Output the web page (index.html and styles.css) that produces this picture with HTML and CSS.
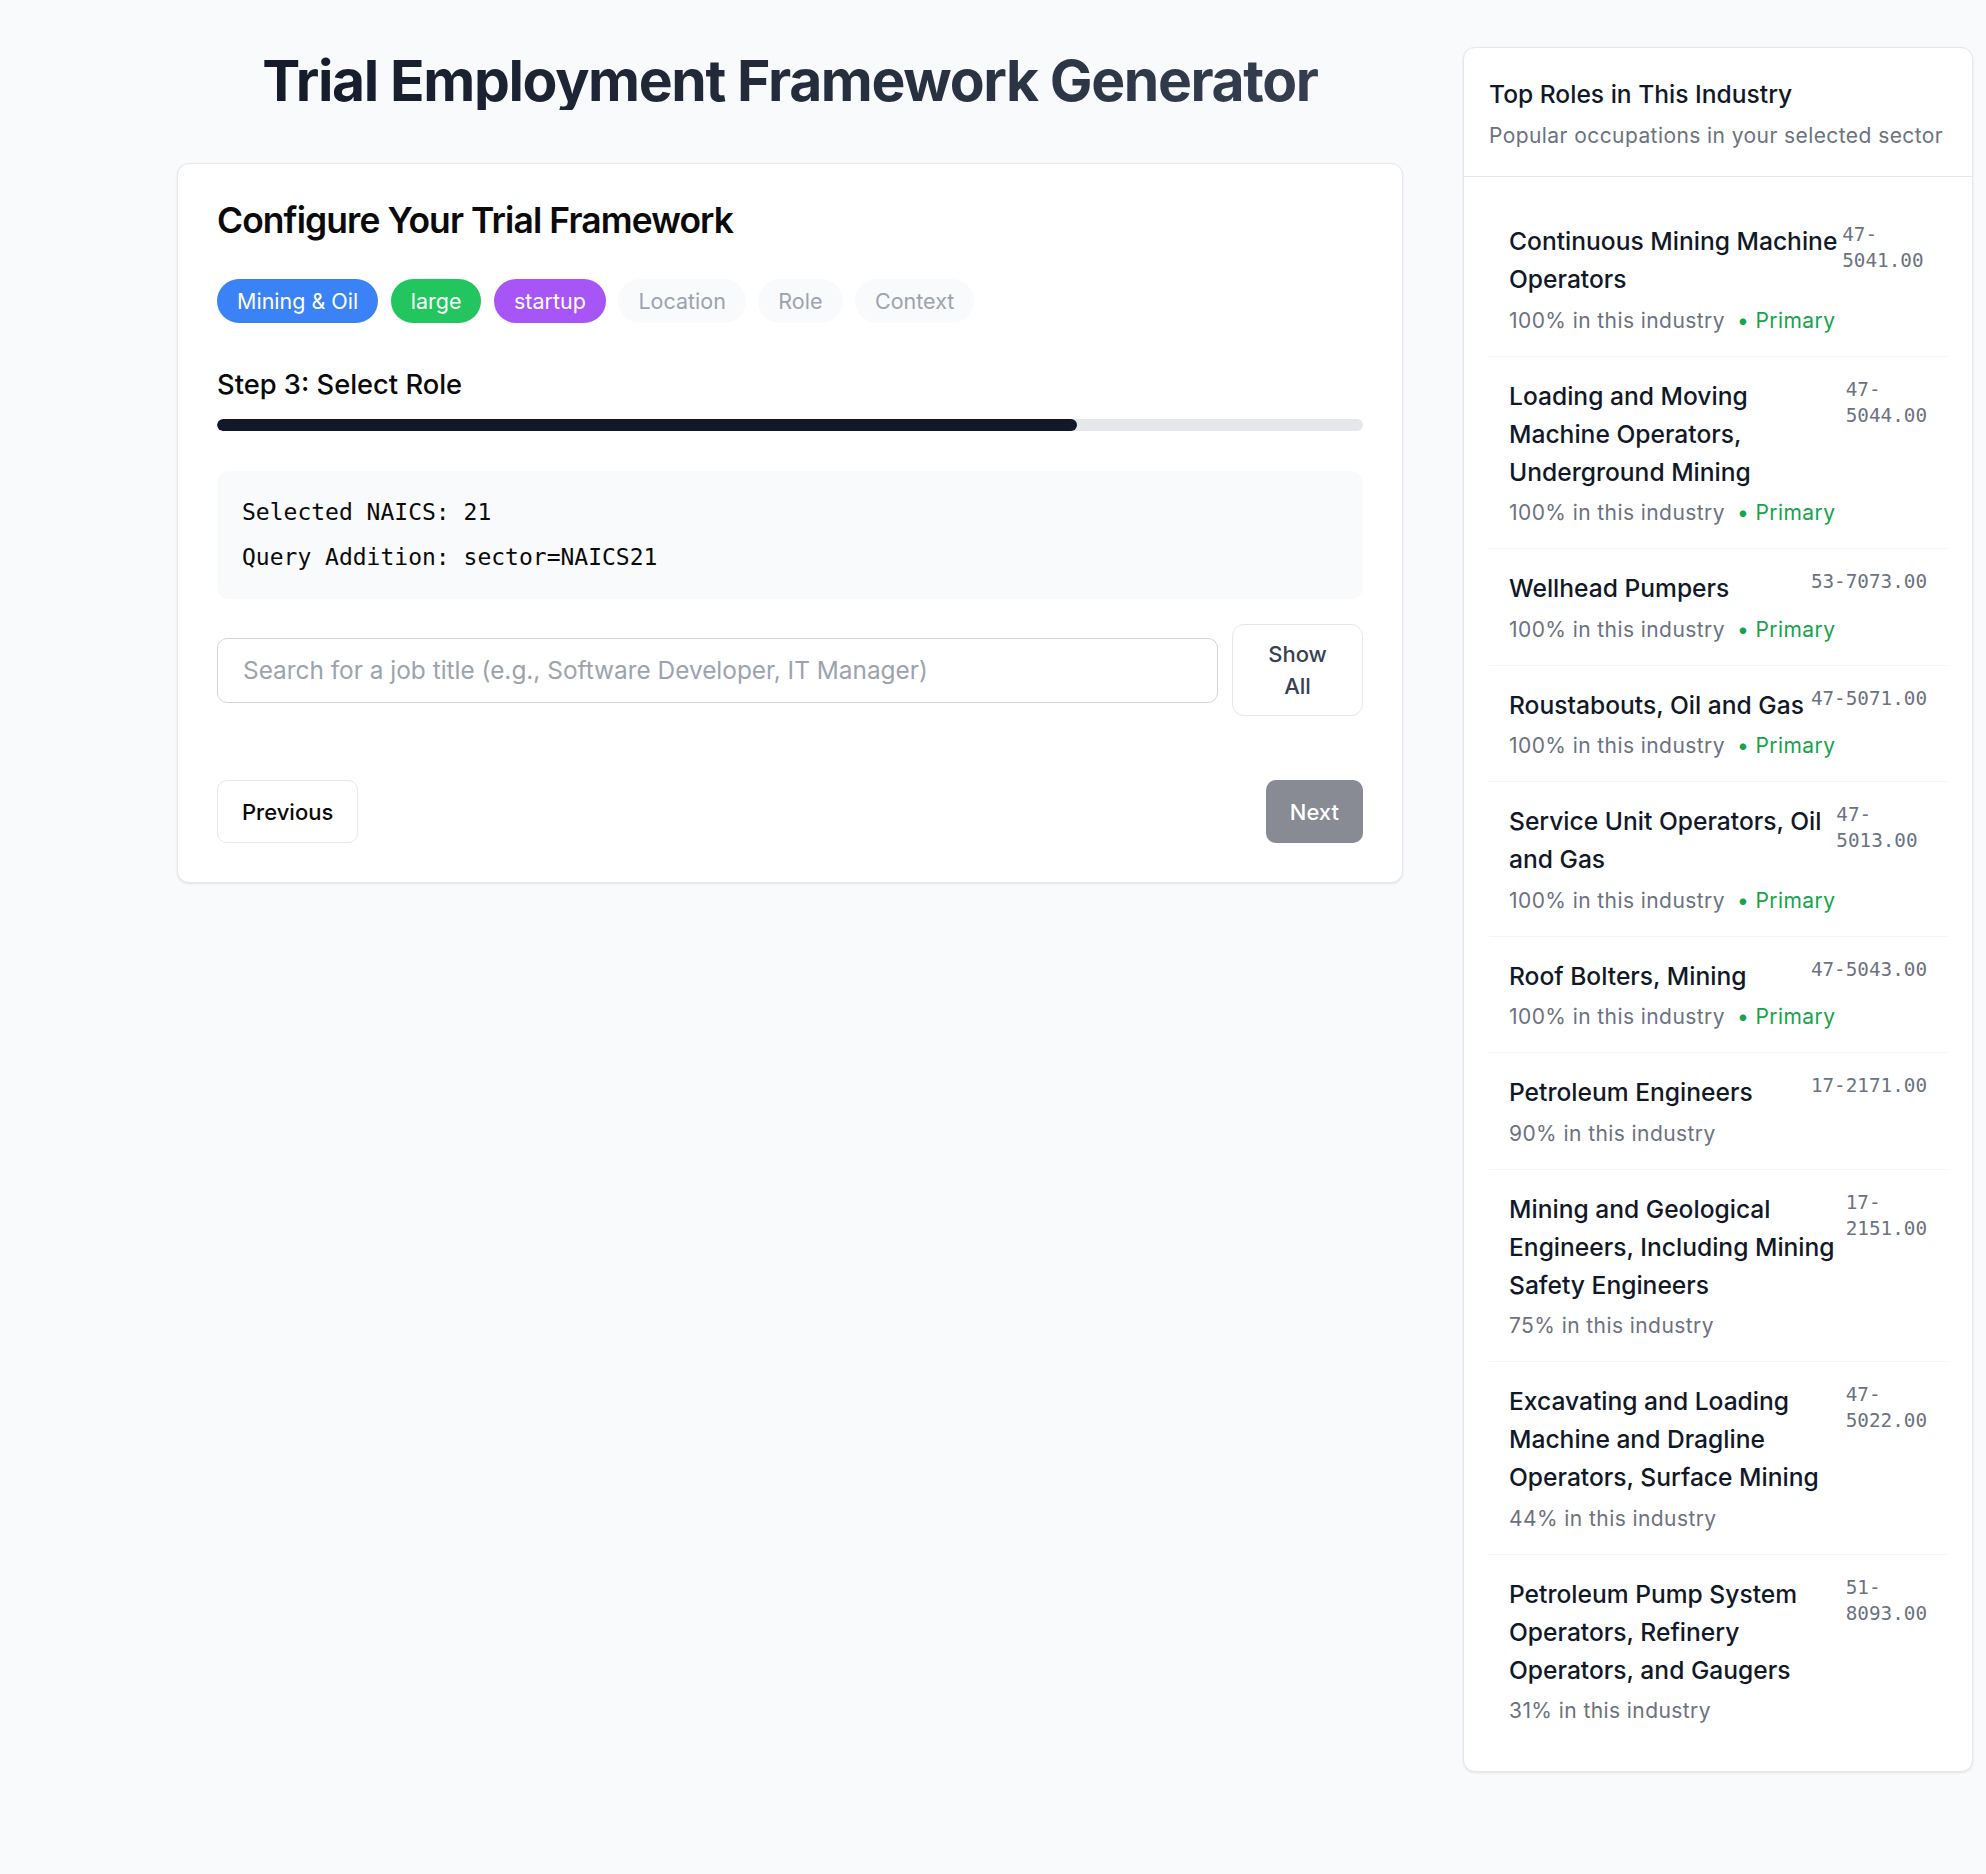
FILE: index.html
```html
<!DOCTYPE html>
<html lang="en">
<head>
<meta charset="utf-8">
<title>Trial Employment Framework Generator</title>
<link rel="stylesheet" href="styles.css">
</head>
<body>
<div class="page">
  <main class="main">
    <h1 class="page-title">Trial Employment Framework Generator</h1>
    <section class="card">
      <h2 class="card-title">Configure Your Trial Framework</h2>
      <div class="chips">
        <span class="chip chip-blue">Mining &amp; Oil</span>
        <span class="chip chip-green">large</span>
        <span class="chip chip-purple">startup</span>
        <span class="chip chip-muted">Location</span>
        <span class="chip chip-muted">Role</span>
        <span class="chip chip-muted">Context</span>
      </div>
      <h3 class="step-title">Step 3: Select Role</h3>
      <div class="progress"><div class="progress-fill" style="width: 75%"></div></div>
      <div class="code-box">
        <p class="code-line">Selected NAICS: 21</p>
        <p class="code-line">Query Addition: sector=NAICS21</p>
      </div>
      <div class="search-row">
        <input class="search-input" type="text" placeholder="Search for a job title (e.g., Software Developer, IT Manager)">
        <button class="show-all" type="button">Show All</button>
      </div>
      <div class="nav-row">
        <button class="btn btn-outline" type="button">Previous</button>
        <button class="btn btn-disabled" type="button">Next</button>
      </div>
    </section>
  </main>

  <aside class="sidebar">
    <div class="side-head">
      <h2 class="side-title">Top Roles in This Industry</h2>
      <p class="side-sub">Popular occupations in your selected sector</p>
    </div>
    <ul class="role-list">
      <li class="role">
        <div class="role-row"><span class="role-title">Continuous Mining Machine Operators</span><span class="role-code">47-5041.00</span></div>
        <div class="role-meta">100% in this industry<span class="primary">• Primary</span></div>
      </li>
      <li class="role">
        <div class="role-row"><span class="role-title">Loading and Moving Machine Operators, Underground Mining</span><span class="role-code">47-5044.00</span></div>
        <div class="role-meta">100% in this industry<span class="primary">• Primary</span></div>
      </li>
      <li class="role">
        <div class="role-row"><span class="role-title">Wellhead Pumpers</span><span class="role-code">53-7073.00</span></div>
        <div class="role-meta">100% in this industry<span class="primary">• Primary</span></div>
      </li>
      <li class="role">
        <div class="role-row"><span class="role-title">Roustabouts, Oil and Gas</span><span class="role-code">47-5071.00</span></div>
        <div class="role-meta">100% in this industry<span class="primary">• Primary</span></div>
      </li>
      <li class="role">
        <div class="role-row"><span class="role-title">Service Unit Operators, Oil and Gas</span><span class="role-code">47-5013.00</span></div>
        <div class="role-meta">100% in this industry<span class="primary">• Primary</span></div>
      </li>
      <li class="role">
        <div class="role-row"><span class="role-title">Roof Bolters, Mining</span><span class="role-code">47-5043.00</span></div>
        <div class="role-meta">100% in this industry<span class="primary">• Primary</span></div>
      </li>
      <li class="role">
        <div class="role-row"><span class="role-title">Petroleum Engineers</span><span class="role-code">17-2171.00</span></div>
        <div class="role-meta">90% in this industry</div>
      </li>
      <li class="role">
        <div class="role-row"><span class="role-title">Mining and Geological Engineers, Including Mining Safety Engineers</span><span class="role-code">17-2151.00</span></div>
        <div class="role-meta">75% in this industry</div>
      </li>
      <li class="role">
        <div class="role-row"><span class="role-title">Excavating and Loading Machine and Dragline Operators, Surface Mining</span><span class="role-code">47-5022.00</span></div>
        <div class="role-meta">44% in this industry</div>
      </li>
      <li class="role">
        <div class="role-row"><span class="role-title">Petroleum Pump System Operators, Refinery Operators, and Gaugers</span><span class="role-code">51-8093.00</span></div>
        <div class="role-meta">31% in this industry</div>
      </li>
    </ul>
  </aside>
</div>
</body>
</html>
```
FILE: styles.css
```css
* { box-sizing: border-box; }

body {
  margin: 0;
  background: #f9fafb;
  font-family: Inter, "Noto Sans", "Liberation Sans", sans-serif;
  color: #111827;
}

.page {
  display: flex;
  align-items: flex-start;
  gap: 60px;
  padding: 47px 13px 0 177px;
  min-height: 1874px;
}

.main {
  width: 1226px;
  flex: none;
  padding-top: 5px;
}

.page-title {
  margin: 0 0 53px;
  text-align: center;
  font-size: 57px;
  line-height: 58px;
  font-weight: 700;
  letter-spacing: -0.024em;
  background: linear-gradient(to right, #111827, #374151);
  -webkit-background-clip: text;
  background-clip: text;
  color: transparent;
}

.card {
  background: #fff;
  border: 1px solid #e5e7eb;
  border-radius: 12px;
  box-shadow: 0 1px 3px rgba(0, 0, 0, 0.06), 0 1px 2px rgba(0, 0, 0, 0.04);
  padding: 39px;
}

.card-title {
  margin: 0 0 40px;
  font-size: 35.4px;
  line-height: 36px;
  font-weight: 600;
  letter-spacing: -0.025em;
  color: #0a0a0a;
}

.chips {
  display: flex;
  gap: 12.5px;
  margin-bottom: 44px;
}

.chip {
  padding: 10px 20px;
  border-radius: 999px;
  font-size: 21.5px;
  line-height: 24px;
  color: #fff;
}

.chip-blue { background: #3b82f6; }
.chip-green { background: #22c55e; }
.chip-purple { background: #a855f7; }
.chip-muted { background: #f9fafb; color: #9ca3af; }

.step-title {
  margin: 0 0 16px;
  font-size: 27.3px;
  line-height: 36px;
  font-weight: 500;
  color: #0a0a0a;
}

.progress {
  height: 12px;
  background: #e5e7eb;
  border-radius: 999px;
  overflow: hidden;
  margin-bottom: 40px;
}

.progress-fill {
  height: 100%;
  background: #111827;
  border-radius: 999px;
}

.code-box {
  background: #f9fafb;
  border-radius: 12px;
  padding: 26px 25px;
  display: flex;
  flex-direction: column;
  gap: 14px;
  margin-bottom: 25px;
}

.code-line {
  margin: 0;
  font-family: "DejaVu Sans Mono", "Liberation Mono", monospace;
  font-size: 23px;
  line-height: 31px;
  color: #0a0a0a;
}

.search-row {
  display: flex;
  align-items: center;
  gap: 14px;
  margin-bottom: 64px;
}

.search-input {
  flex: 1;
  height: 65px;
  border: 1px solid #d1d5db;
  border-radius: 10px;
  padding: 0 25px;
  font-family: inherit;
  font-size: 24.4px;
  color: #111827;
  background: #fff;
  outline: none;
}

.search-input::placeholder { color: #9ca3af; }

.show-all {
  width: 131px;
  padding: 13px 25px;
  border: 1px solid #e5e7eb;
  border-radius: 12px;
  background: #fff;
  font-family: inherit;
  font-size: 22px;
  line-height: 32px;
  font-weight: 500;
  color: #374151;
  text-align: center;
}

.nav-row {
  display: flex;
  justify-content: space-between;
}

.btn {
  height: 63px;
  padding: 0 24px;
  border-radius: 10px;
  font-family: inherit;
  font-size: 22px;
  font-weight: 500;
}

.btn-outline {
  background: #fff;
  border: 1px solid #e5e7eb;
  color: #0a0a0a;
}

.btn-disabled {
  background: #888b93;
  border: none;
  color: #fff;
}

.sidebar {
  width: 510px;
  flex: none;
  background: #fff;
  border: 1px solid #e5e7eb;
  border-radius: 12px;
  box-shadow: 0 1px 3px rgba(0, 0, 0, 0.06), 0 1px 2px rgba(0, 0, 0, 0.04);
}

.side-head {
  padding: 28px 25px 25px;
  border-bottom: 1px solid #e5e7eb;
}

.side-title {
  margin: 0 0 9px;
  font-size: 24.6px;
  line-height: 36px;
  font-weight: 500;
  color: #111827;
}

.side-sub {
  margin: 0;
  font-size: 21px;
  line-height: 30px;
  letter-spacing: 0.02em;
  color: #6b7280;
}

.role-list {
  list-style: none;
  margin: 0;
  padding: 25px;
}

.role {
  padding: 20px;
  border-bottom: 1px solid #f3f4f6;
}

.role:last-child { border-bottom: none; }

.role-row {
  display: flex;
  justify-content: space-between;
  align-items: flex-start;
  gap: 3px;
}

.role-title {
  font-size: 24.6px;
  line-height: 38px;
  font-weight: 500;
  color: #111827;
}

.role-code {
  font-family: "DejaVu Sans Mono", "Liberation Mono", monospace;
  font-size: 19.3px;
  line-height: 26px;
  color: #6b7280;
}

.role-meta {
  margin-top: 7.5px;
  font-size: 21px;
  line-height: 30px;
  letter-spacing: 0.02em;
  color: #6b7280;
}

.primary {
  margin-left: 12px;
  color: #16a34a;
}
```
